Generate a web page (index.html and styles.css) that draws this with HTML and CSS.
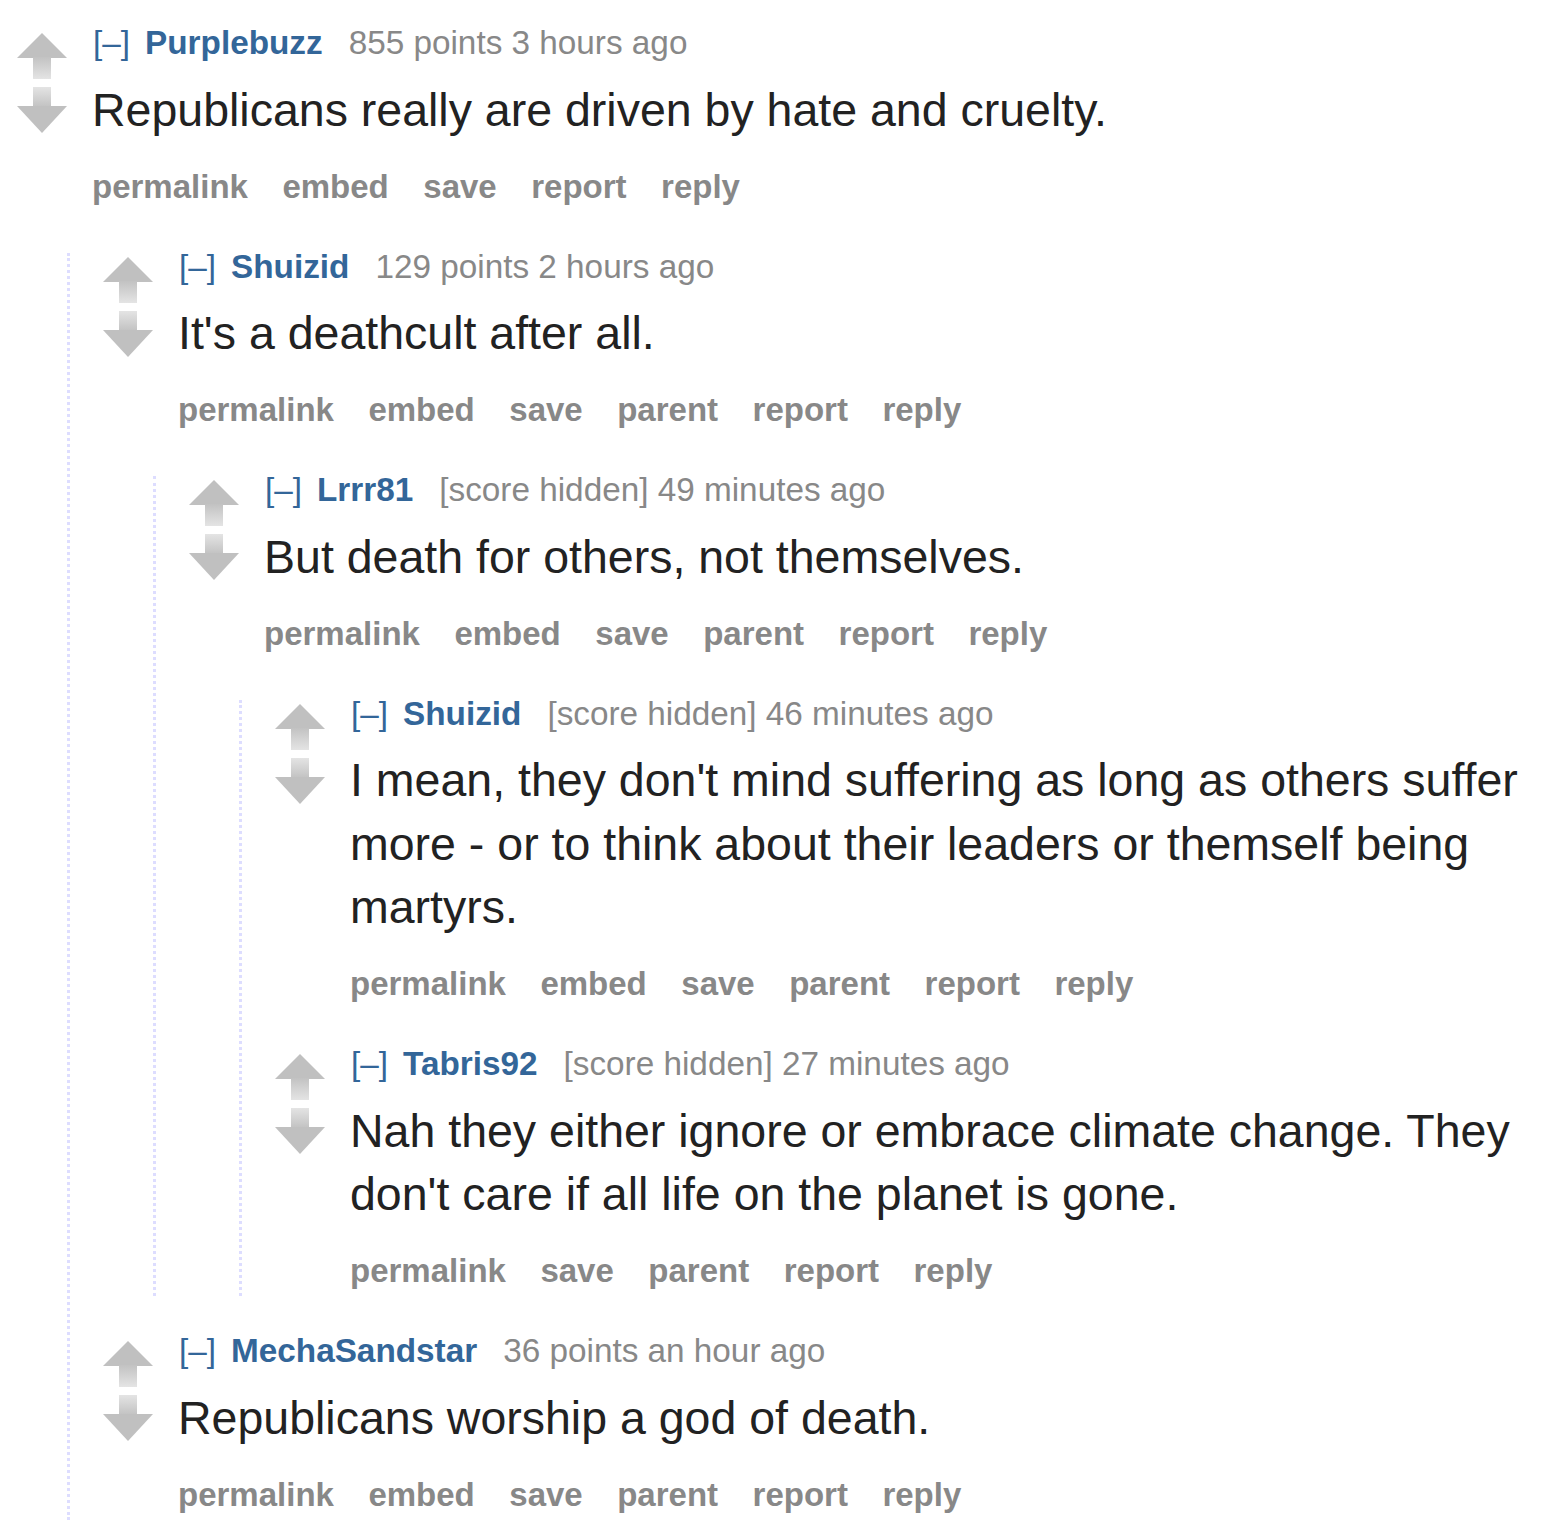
FILE: index.html
```html
<!DOCTYPE html>
<html lang="en">
<head>
    <meta charset="UTF-8">
    <meta name="viewport" content="width=device-width, initial-scale=1.0">
    <title>Comments</title>
    <link rel="stylesheet" href="styles.css">
</head>
<body>
    <svg class="sprite" width="0" height="0">
        <defs>
            <linearGradient id="stem-up" x1="0" y1="0" x2="0" y2="1">
                <stop offset="0" stop-color="#c2c2c2"/>
                <stop offset="1" stop-color="#e4e4e4"/>
            </linearGradient>
            <linearGradient id="stem-down" x1="0" y1="0" x2="0" y2="1">
                <stop offset="0" stop-color="#e4e4e4"/>
                <stop offset="1" stop-color="#c2c2c2"/>
            </linearGradient>
            <symbol id="arrow-up" viewBox="0 0 50 46">
                <polygon points="0,25 25,0 50,25" fill="#c0c0c0"/>
                <rect x="16" y="24" width="18" height="22" fill="url(#stem-up)"/>
            </symbol>
            <symbol id="arrow-down" viewBox="0 0 50 46">
                <rect x="16" y="0" width="18" height="20" fill="url(#stem-down)"/>
                <polygon points="0,19 50,19 25,46" fill="#c0c0c0"/>
            </symbol>
        </defs>
    </svg>

    <div class="commentarea">
        <div class="thing">
            <div class="comment">
                <div class="midcol">
                    <svg class="arrow"><use href="#arrow-up"/></svg>
                    <svg class="arrow"><use href="#arrow-down"/></svg>
                </div>
                <div class="entry">
                    <p class="tagline"><a class="expand">[–]</a><a class="author">Purplebuzz</a><span class="score">855 points 3 hours ago</span></p>
                    <div class="md"><p>Republicans really are driven by hate and cruelty.</p></div>
                    <ul class="buttons">
                        <li>permalink</li><li>embed</li><li>save</li><li>report</li><li>reply</li>
                    </ul>
                </div>
            </div>

            <div class="child">
                <div class="thing">
                    <div class="comment">
                        <div class="midcol">
                            <svg class="arrow"><use href="#arrow-up"/></svg>
                            <svg class="arrow"><use href="#arrow-down"/></svg>
                        </div>
                        <div class="entry">
                            <p class="tagline"><a class="expand">[–]</a><a class="author">Shuizid</a><span class="score">129 points 2 hours ago</span></p>
                            <div class="md"><p>It's a deathcult after all.</p></div>
                            <ul class="buttons">
                                <li>permalink</li><li>embed</li><li>save</li><li>parent</li><li>report</li><li>reply</li>
                            </ul>
                        </div>
                    </div>

                    <div class="child">
                        <div class="thing">
                            <div class="comment">
                                <div class="midcol">
                                    <svg class="arrow"><use href="#arrow-up"/></svg>
                                    <svg class="arrow"><use href="#arrow-down"/></svg>
                                </div>
                                <div class="entry">
                                    <p class="tagline"><a class="expand">[–]</a><a class="author">Lrrr81</a><span class="score">[score hidden] 49 minutes ago</span></p>
                                    <div class="md"><p>But death for others, not themselves.</p></div>
                                    <ul class="buttons">
                                        <li>permalink</li><li>embed</li><li>save</li><li>parent</li><li>report</li><li>reply</li>
                                    </ul>
                                </div>
                            </div>

                            <div class="child">
                                <div class="thing">
                                    <div class="comment">
                                        <div class="midcol">
                                            <svg class="arrow"><use href="#arrow-up"/></svg>
                                            <svg class="arrow"><use href="#arrow-down"/></svg>
                                        </div>
                                        <div class="entry">
                                            <p class="tagline"><a class="expand">[–]</a><a class="author">Shuizid</a><span class="score">[score hidden] 46 minutes ago</span></p>
                                            <div class="md"><p>I mean, they don't mind suffering as long as others suffer more - or to think about their leaders or themself being martyrs.</p></div>
                                            <ul class="buttons">
                                                <li>permalink</li><li>embed</li><li>save</li><li>parent</li><li>report</li><li>reply</li>
                                            </ul>
                                        </div>
                                    </div>
                                </div>

                                <div class="thing">
                                    <div class="comment">
                                        <div class="midcol">
                                            <svg class="arrow"><use href="#arrow-up"/></svg>
                                            <svg class="arrow"><use href="#arrow-down"/></svg>
                                        </div>
                                        <div class="entry">
                                            <p class="tagline"><a class="expand">[–]</a><a class="author">Tabris92</a><span class="score">[score hidden] 27 minutes ago</span></p>
                                            <div class="md"><p>Nah they either ignore or embrace climate change. They don't care if all life on the planet is gone.</p></div>
                                            <ul class="buttons">
                                                <li>permalink</li><li>save</li><li>parent</li><li>report</li><li>reply</li>
                                            </ul>
                                        </div>
                                    </div>
                                </div>
                            </div>
                        </div>
                    </div>
                </div>

                <div class="thing">
                    <div class="comment">
                        <div class="midcol">
                            <svg class="arrow"><use href="#arrow-up"/></svg>
                            <svg class="arrow"><use href="#arrow-down"/></svg>
                        </div>
                        <div class="entry">
                            <p class="tagline"><a class="expand">[–]</a><a class="author">MechaSandstar</a><span class="score">36 points an hour ago</span></p>
                            <div class="md"><p>Republicans worship a god of death.</p></div>
                            <ul class="buttons">
                                <li>permalink</li><li>embed</li><li>save</li><li>parent</li><li>report</li><li>reply</li>
                            </ul>
                        </div>
                    </div>
                </div>
            </div>
        </div>
    </div>
</body>
</html>
```

FILE: styles.css
```css
:root {
    --link: #369;
    --muted: #888;
    --text: #222;
    --thread-line: #ddf;
}

body {
    font-family: "Liberation Sans", Arial, Helvetica, sans-serif;
    background-color: #fff;
    color: var(--text);
    margin: 0;
    padding: 0;
}

.sprite {
    display: block;
    width: 0;
    height: 0;
    overflow: hidden;
}

.commentarea {
    padding: 29px 12px 0 0;
}

.thing + .thing {
    margin-top: 41px;
}

.comment {
    display: flex;
}

.midcol {
    flex-shrink: 0;
    width: 50px;
    margin-left: 17px;
    margin-right: 26px;
    padding-top: 4px;
    display: flex;
    flex-direction: column;
    gap: 8px;
}

.arrow {
    display: block;
    width: 50px;
    height: 46px;
}

.entry {
    flex: 1;
    min-width: 0;
    padding-bottom: 7px;
}

.tagline {
    margin: 0;
    font-size: 33.3px;
    line-height: 27px;
    color: var(--muted);
    white-space: nowrap;
}

.expand {
    color: var(--link);
    margin-right: 15px;
}

.author {
    color: var(--link);
    font-weight: bold;
    margin-right: 26px;
}

.md {
    margin-top: 22.5px;
    margin-left: -1px;
    font-size: 46.5px;
    line-height: 63.5px;
    color: var(--text);
}

.md p {
    margin: 0;
}

.buttons {
    list-style: none;
    margin: 25.5px 0 0 -1px;
    padding: 0;
    display: flex;
    gap: 34.5px;
    font-size: 33px;
    line-height: 37px;
    font-weight: bold;
    color: var(--muted);
}

/* nested replies */
.child {
    margin-left: 67px;
    margin-top: 41px;
    padding-left: 16px;
    border-left: 3px dotted var(--thread-line);
}
```
